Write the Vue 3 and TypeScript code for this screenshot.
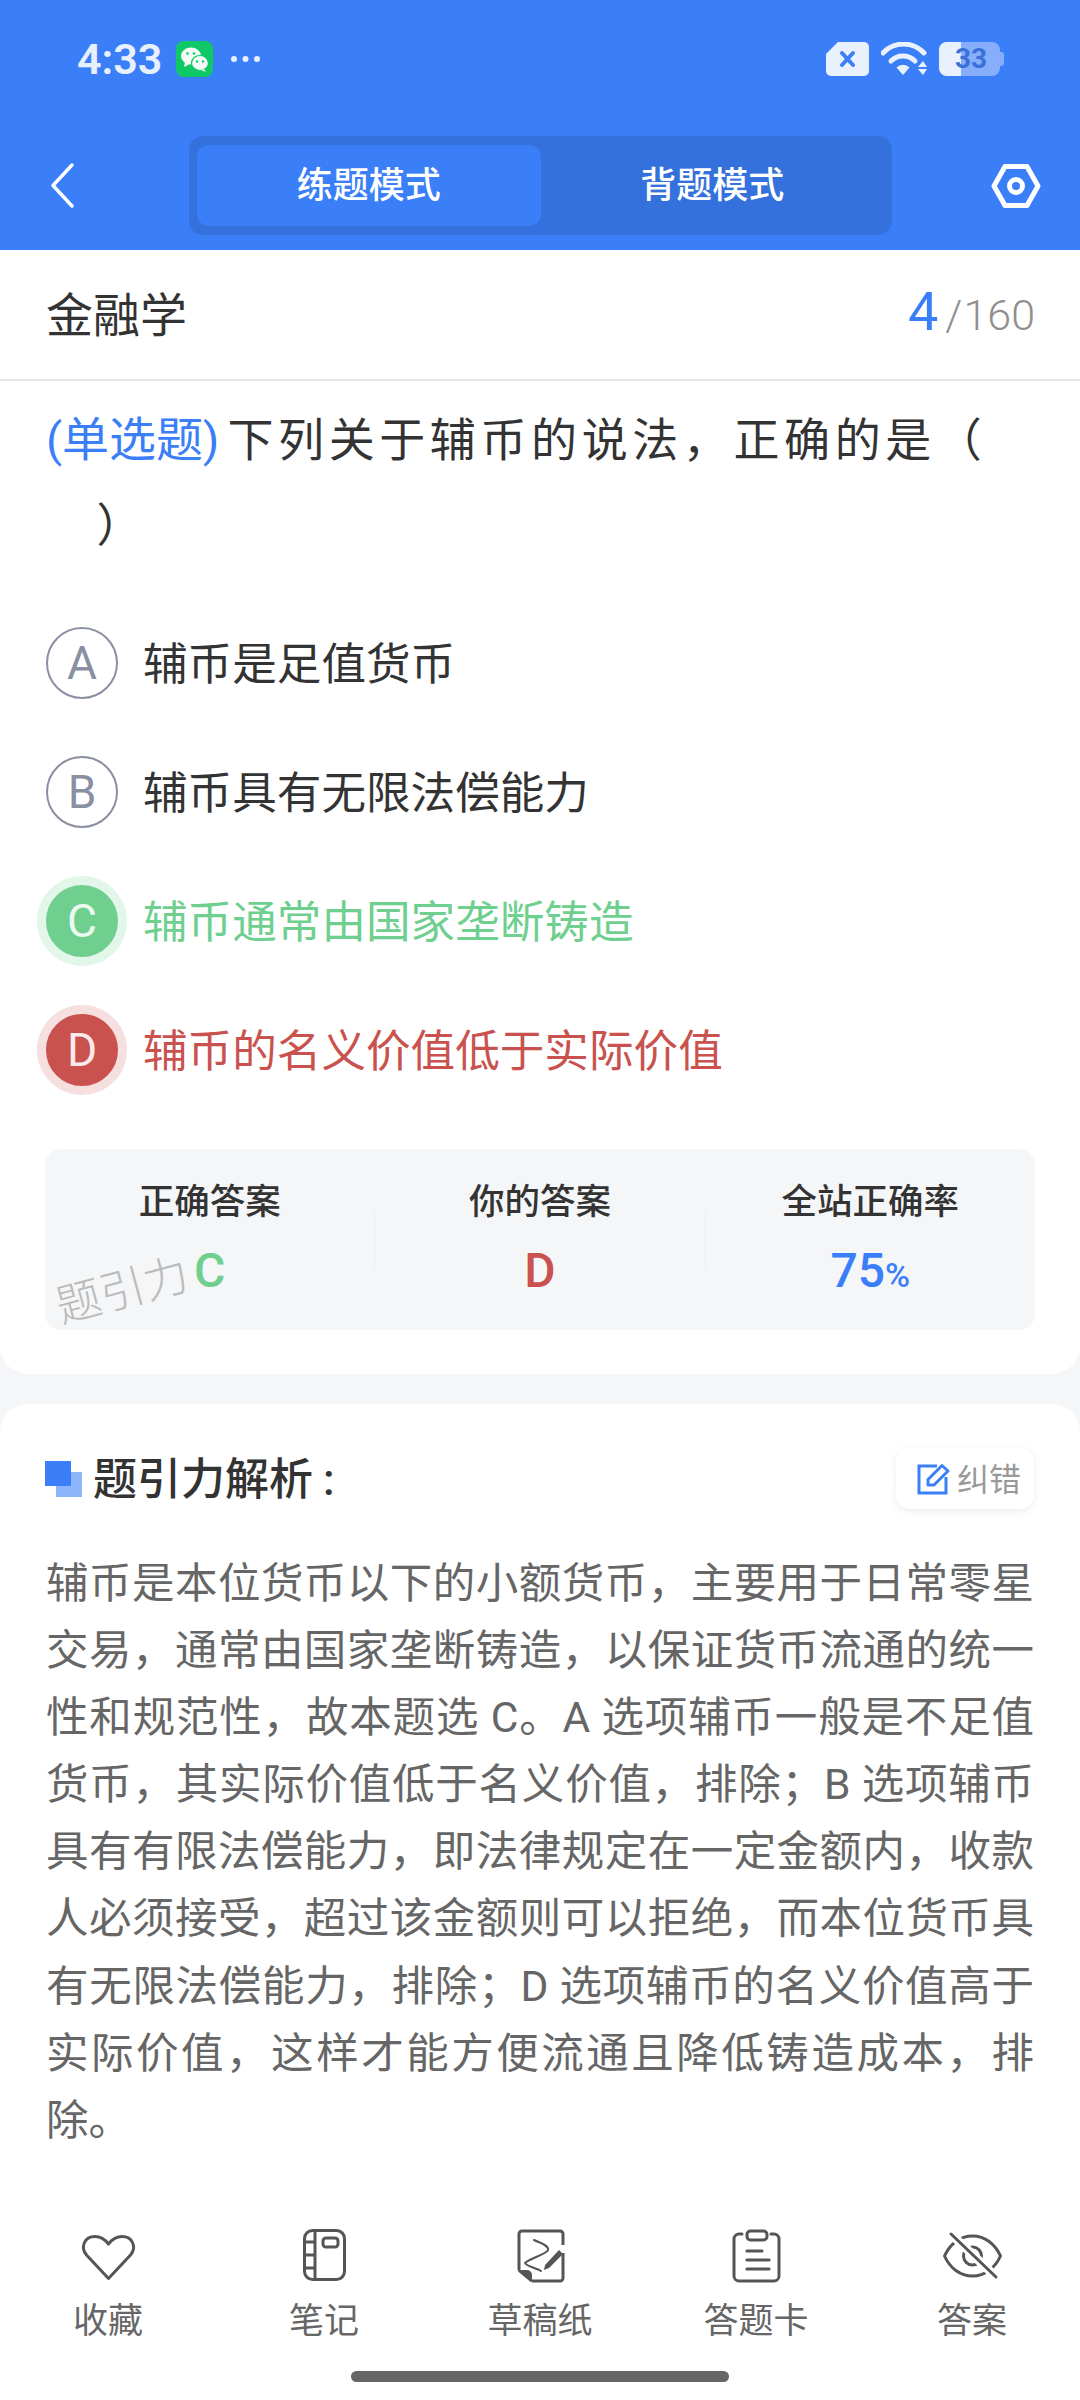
<script setup lang="ts">
const options = [
  { key: 'A', text: '辅币是足值货币', state: '' },
  { key: 'B', text: '辅币具有无限法偿能力', state: '' },
  { key: 'C', text: '辅币通常由国家垄断铸造', state: 'ok' },
  { key: 'D', text: '辅币的名义价值低于实际价值', state: 'bad' },
]
const explanation =
  '辅币是本位货币以下的小额货币，主要用于日常零星交易，通常由国家垄断铸造，以保证货币流通的统一性和规范性，故本题选 C。A 选项辅币一般是不足值货币，其实际价值低于名义价值，排除；B 选项辅币具有有限法偿能力，即法律规定在一定金额内，收款人必须接受，超过该金额则可以拒绝，而本位货币具有无限法偿能力，排除；D 选项辅币的名义价值高于实际价值，这样才能方便流通且降低铸造成本，排除。'
</script>

<template>
  <div class="page">
    <header class="header">
      <div class="status">
        <div class="status-left">
          <span class="time">4:33</span>
          <svg class="wechat" width="37" height="36" viewBox="0 0 37 36">
            <rect width="37" height="36" rx="8" fill="#0fc866" />
            <ellipse cx="15" cy="15" rx="10" ry="8.5" fill="#f4fbf6" />
            <path d="M9 21l-1 5 6-3z" fill="#f4fbf6" />
            <ellipse cx="24" cy="22" rx="8.5" ry="7.5" fill="#f4fbf6" stroke="#0fc866" stroke-width="1.2" />
            <path d="M28 28l2 3-5-2z" fill="#f4fbf6" />
            <circle cx="11.5" cy="12.5" r="1.3" fill="#0fc866" />
            <circle cx="18" cy="12.5" r="1.3" fill="#0fc866" />
            <circle cx="21" cy="20.5" r="1.2" fill="#0fc866" />
            <circle cx="27" cy="20.5" r="1.2" fill="#0fc866" />
          </svg>
          <svg class="dots" width="30" height="8" viewBox="0 0 30 8">
            <circle cx="4" cy="4" r="3" fill="#e8f0fe" />
            <circle cx="15.5" cy="4" r="3" fill="#e8f0fe" />
            <circle cx="27" cy="4" r="3" fill="#e8f0fe" />
          </svg>
        </div>
        <div class="status-right">
          <svg width="43" height="34" viewBox="0 0 43 34">
            <path d="M12 0H38a5 5 0 0 1 5 5V29a5 5 0 0 1-5 5H5a5 5 0 0 1-5-5V12z" fill="#eaf1fe" />
            <path d="M16 11l11 12M27 11L16 23" stroke="#3b7ff8" stroke-width="4" stroke-linecap="round" />
          </svg>
          <svg width="46" height="34" viewBox="0 0 46 34">
            <path d="M2 11a28 28 0 0 1 41 0" fill="none" stroke="#eaf1fe" stroke-width="5" stroke-linecap="round" />
            <path d="M10 19a17 17 0 0 1 24 0" fill="none" stroke="#eaf1fe" stroke-width="5" stroke-linecap="round" />
            <path d="M15.5 25.5a9 9 0 0 1 13 0L22 33z" fill="#eaf1fe" />
            <path d="M37 25l5-6 4 6zM37 27h9l-4 6z" fill="#eaf1fe" />
          </svg>
          <div class="battery">
            <span class="battery-fill"></span>
            <span class="battery-num">33</span>
          </div>
        </div>
      </div>
      <div class="nav">
        <svg class="back" width="24" height="45" viewBox="0 0 24 45">
          <path d="M22 2L3 22.5 22 43" fill="none" stroke="#fff" stroke-width="3.4" stroke-linecap="round" stroke-linejoin="round" />
        </svg>
        <div class="tabs">
          <div class="tab active">练题模式</div>
          <div class="tab">背题模式</div>
        </div>
        <svg class="hex" width="50" height="46" viewBox="0 0 50 46">
          <path d="M14 3.5H36L47 23 36 42.5H14L3 23z" fill="none" stroke="#fff" stroke-width="5" stroke-linejoin="round" />
          <circle cx="25" cy="23" r="6.5" fill="none" stroke="#fff" stroke-width="5" />
        </svg>
      </div>
    </header>

    <section class="card first">
      <div class="title-row">
        <span class="subject">金融学</span>
        <span class="count"><b>4</b><i>/</i>160</span>
      </div>
      <p class="question"><span class="type">(单选题)</span><span class="stem">下列关于辅币的说法，正确的是（<br />　）</span></p>
      <ul class="options">
        <li v-for="o in options" :key="o.key" class="option" :class="o.state">
          <span class="mark">{{ o.key }}</span>
          <span class="text">{{ o.text }}</span>
        </li>
      </ul>
      <div class="stats">
        <div class="stat">
          <span class="label">正确答案</span>
          <span class="value ok">C</span>
        </div>
        <span class="rule"></span>
        <div class="stat">
          <span class="label">你的答案</span>
          <span class="value bad">D</span>
        </div>
        <span class="rule"></span>
        <div class="stat">
          <span class="label">全站正确率</span>
          <span class="value rate">75<small>%</small></span>
        </div>
        <span class="watermark">题引力</span>
      </div>
    </section>

    <section class="card second">
      <div class="analysis-head">
        <span class="squares"><i class="light"></i><i class="dark"></i></span>
        <h2>题引力解析<span class="colon">:</span></h2>
        <button class="fix">
          <svg width="33" height="32" viewBox="0 0 33 32">
            <path d="M20 3H2v27h27V14" fill="none" stroke="#3b7ff8" stroke-width="3" />
            <path d="M11 16.5L25 2.5l6 5.5L17 22h-6z" fill="none" stroke="#3b7ff8" stroke-width="3" stroke-linejoin="round" />
          </svg>
          <span class="fix-label">纠错</span>
        </button>
      </div>
      <p class="explain">{{ explanation }}</p>

      <nav class="bottom">
        <div class="item">
          <svg width="64" height="56" viewBox="0 0 64 56">
            <path d="M32.5 50.5L10.500 27C4 19 8.500 8.500 19 8.500c6 0 10 3 13.500 7.500C36 11.500 40 8.500 46 8.500c10.500 0 15 10.500 8.500 18.500z" fill="none" stroke="#555" stroke-width="3" stroke-linejoin="round" />
          </svg>
          <span>收藏</span>
        </div>
        <div class="item">
          <svg width="64" height="56" viewBox="0 0 64 56">
            <rect x="12.500" y="2.500" width="40" height="49" rx="8" fill="none" stroke="#555" stroke-width="3" />
            <path d="M23 3v48M13 14h10M13 27h10M13 40h10" fill="none" stroke="#555" stroke-width="3" />
            <rect x="31" y="10" width="15" height="9" rx="3" fill="none" stroke="#555" stroke-width="3" />
          </svg>
          <span>笔记</span>
        </div>
        <div class="item">
          <svg width="64" height="56" viewBox="0 0 64 56">
            <path d="M11 42V6a3 3 0 0 1 3-3h38a3 3 0 0 1 3 3v11M55 25v25a3 3 0 0 1-3 3H24" fill="none" stroke="#555" stroke-width="3" />
            <path d="M11 43h8a4 4 0 0 1 4 4v6z" fill="#555" stroke="#555" stroke-width="2" stroke-linejoin="round" />
            <path d="M26 12c6 3 15 5 14 10-1 4-20 9-23 13 1 3 11 5 16 8" fill="none" stroke="#555" stroke-width="2" stroke-linecap="round" />
            <path d="M37 37l14-15 4 4-14 14-5 2z" fill="#555" />
          </svg>
          <span>草稿纸</span>
        </div>
        <div class="item">
          <svg width="64" height="56" viewBox="0 0 64 56">
            <path d="M18 6h-3a5 5 0 0 0-5 5v37a5 5 0 0 0 5 5h35a5 5 0 0 0 5-5V11a5 5 0 0 0-5-5h-3" fill="none" stroke="#555" stroke-width="3" stroke-linecap="round" />
            <rect x="23" y="3" width="20" height="9" rx="3.500" fill="none" stroke="#555" stroke-width="3" />
            <path d="M23 23h15M23 32h22M23 41h22" fill="none" stroke="#555" stroke-width="3.200" stroke-linecap="round" />
          </svg>
          <span>答题卡</span>
        </div>
        <div class="item">
          <svg width="64" height="56" viewBox="0 0 64 56">
            <path d="M4.500 28C10 16 20 8 32.500 8S55 16 60.500 28C55 40 45 48 32.500 48S10 40 4.500 28z" fill="none" stroke="#555" stroke-width="3" stroke-linejoin="round" />
            <circle cx="32.500" cy="28" r="9" fill="none" stroke="#555" stroke-width="3" />
            <path d="M10 5l46 44" stroke="#fff" stroke-width="9" />
            <path d="M11 6l45 43" stroke="#555" stroke-width="3" stroke-linecap="round" />
          </svg>
          <span>答案</span>
        </div>
      </nav>
      <div class="home-wrap"><span class="home"></span></div>
    </section>
  </div>
</template>

<style>
html,
body {
  margin: 0;
  background: #f5f6f8;
}
</style>

<style scoped>
.page {
  width: 1080px;
  height: 2400px;
  overflow: hidden;
  background: #f5f6f8;
  display: flex;
  flex-direction: column;
  font-family: Roboto, "Noto Sans CJK SC", sans-serif;
  color: #333;
}
.header {
  height: 250px;
  background: #3b7ff8;
  display: flex;
  flex-direction: column;
  flex: none;
}
.status {
  height: 136px;
  padding: 0 76px 0 77px;
  display: flex;
  justify-content: space-between;
  align-items: flex-start;
}
.status-left {
  display: flex;
  align-items: center;
  margin-top: 41px;
  height: 36px;
}
.time {
  font-size: 43px;
  font-weight: 600;
  color: #e8f0fe;
  width: 99px;
  line-height: 36px;
}
.dots {
  margin-left: 17px;
}
.status-right {
  display: flex;
  align-items: center;
  gap: 12px;
  margin-top: 42px;
}
.battery {
  position: relative;
  width: 61px;
  height: 34px;
  border-radius: 8px;
  background: #86aefb;
  overflow: visible;
  margin-right: 4px;
}
.battery::after {
  content: "";
  position: absolute;
  right: -4px;
  top: 10px;
  width: 4px;
  height: 14px;
  border-radius: 0 3px 3px 0;
  background: #86aefb;
}
.battery-fill {
  position: absolute;
  left: 0;
  top: 0;
  bottom: 0;
  width: 22px;
  border-radius: 8px 0 0 8px;
  background: #eaf1fe;
}
.battery-num {
  position: absolute;
  left: 16px;
  width: 32px;
  top: 0;
  line-height: 34px;
  text-align: center;
  font-size: 28px;
  font-weight: 700;
  color: #3a70d8;
}
.nav {
  display: flex;
  align-items: center;
  height: 99px;
  padding: 0 0 0 50px;
}
.back {
  flex: none;
}
.tabs {
  width: 703px;
  height: 99px;
  margin-left: 115px;
  box-sizing: border-box;
  padding: 9px 8px;
  background: #3571dc;
  border-radius: 14px;
  display: flex;
}
.tab {
  width: 344px;
  height: 81px;
  line-height: 82px;
  text-align: center;
  color: #fff;
  font-size: 36px;
  font-weight: 500;
  border-radius: 12px;
}
.tab.active {
  background: #3b7ff8;
}
.hex {
  margin-left: 99px;
  flex: none;
}
.card {
  background: #fff;
}
.first {
  height: 1124px;
  flex: none;
  box-sizing: border-box;
  border-radius: 0 0 28px 28px;
}
.title-row {
  height: 131px;
  box-sizing: border-box;
  border-bottom: 2px solid #e6e6e6;
  padding: 0 45px 6px 46px;
  display: flex;
  align-items: center;
  justify-content: space-between;
}
.subject {
  font-size: 47px;
  color: #333;
}
.count {
  font-size: 43px;
  font-weight: 300;
  color: #8f8f8f;
  display: flex;
  align-items: baseline;
}
.count b {
  font-size: 54px;
  font-weight: 400;
  color: #3b7ff8;
}
.count i {
  font-style: normal;
  margin: 0 1px 0 7px;
}
.question {
  margin: 16px 0 0;
  padding: 0 46px;
  font-size: 46px;
  line-height: 85px;
  color: #333;
}
.type {
  color: #3b7ff8;
  font-size: 47px;
  margin-right: 8px;
}
.stem {
  letter-spacing: 4.6px;
}
.options {
  list-style: none;
  margin: 59px 0 0;
  padding: 0 46px;
  display: flex;
  flex-direction: column;
  gap: 57px;
}
.option {
  display: flex;
  align-items: center;
  height: 72px;
  font-size: 44.6px;
}
.text {
  padding-bottom: 6px;
}
.mark {
  width: 72px;
  height: 72px;
  box-sizing: border-box;
  border: 2px solid #8a8fa3;
  border-radius: 50%;
  color: #8a8fa3;
  font-size: 46px;
  font-weight: 400;
  display: flex;
  align-items: center;
  justify-content: center;
  flex: none;
  margin-right: 25px;
}
.option.ok .mark {
  background: #6fcf8f;
  border-color: #6fcf8f;
  color: #eafaf0;
  box-shadow: 0 0 0 9px #e2f6ea;
}
.option.ok .text {
  color: #6fcf8f;
}
.option.bad .mark {
  background: #c9524f;
  border-color: #c9524f;
  color: #fbeaea;
  box-shadow: 0 0 0 9px #f5dfdf;
}
.option.bad .text {
  color: #c9524f;
}
.stats {
  position: relative;
  margin: 63px 45px 0 45px;
  height: 181px;
  background: #f5f6f8;
  border-radius: 16px;
  display: grid;
  grid-template-columns: 1fr 1px 1fr 1px 1fr;
}
.stat {
  display: flex;
  flex-direction: column;
  align-items: center;
}
.label {
  margin-top: 30px;
  height: 46px;
  line-height: 46px;
  font-size: 35.5px;
  font-weight: 500;
  color: #333;
}
.value {
  margin-top: 21px;
  height: 50px;
  line-height: 50px;
  font-size: 48px;
  font-weight: 500;
}
.value.ok {
  color: #6fcf8f;
}
.value.bad {
  color: #c9524f;
}
.value.rate {
  color: #3b7ff8;
}
.value small {
  font-size: 34px;
}
.rule {
  margin-top: 60px;
  height: 60px;
  background: #ecedf0;
}
.watermark {
  position: absolute;
  left: 10px;
  top: 117px;
  font-size: 45px;
  font-weight: 300;
  line-height: 50px;
  color: #bbb;
  transform: rotate(-15deg);
}
.second {
  margin-top: 30px;
  flex: 1;
  border-radius: 28px 28px 0 0;
  box-sizing: border-box;
  padding: 44px 46px 0 46px;
  display: flex;
  flex-direction: column;
}
.analysis-head {
  display: flex;
  align-items: center;
  height: 61px;
}
.squares {
  position: relative;
  width: 37px;
  height: 36px;
  margin-left: -1px;
  flex: none;
}
.squares i {
  position: absolute;
  width: 26px;
  height: 25px;
}
.squares .dark {
  left: 0;
  top: 0;
  background: #3b7ff8;
}
.squares .light {
  left: 11px;
  top: 11px;
  background: #8cb5fb;
}
h2 {
  margin: 0 0 5px 11px;
  font-size: 44px;
  font-weight: 500;
  color: #333;
  flex: 1;
}
.colon {
  margin-left: 10px;
}
.fix {
  width: 138px;
  height: 61px;
  border: 0;
  padding: 0 0 0 21px;
  background: #fff;
  border-radius: 14px;
  box-shadow: 0 2px 8px rgba(0, 0, 0, 0.08);
  display: flex;
  align-items: center;
  gap: 7px;
  font-family: inherit;
  font-size: 32px;
  color: #999;
  flex: none;
}
.fix-label {
  padding-bottom: 4px;
}
.explain {
  margin: 41px 0 0;
  height: 678px;
  font-size: 42.5px;
  line-height: 67.1px;
  color: #666;
  text-align: justify;
}
.bottom {
  margin: 0 -46px;
  display: grid;
  grid-template-columns: repeat(5, 216px);
}
.item {
  display: flex;
  flex-direction: column;
  align-items: center;
  color: #666;
  font-size: 35px;
  line-height: 48px;
}
.item span {
  margin-top: 14px;
}
.home-wrap {
  margin-top: 25px;
  display: flex;
  justify-content: center;
}
.home {
  width: 378px;
  height: 11px;
  border-radius: 6px;
  background: #666;
}
</style>
